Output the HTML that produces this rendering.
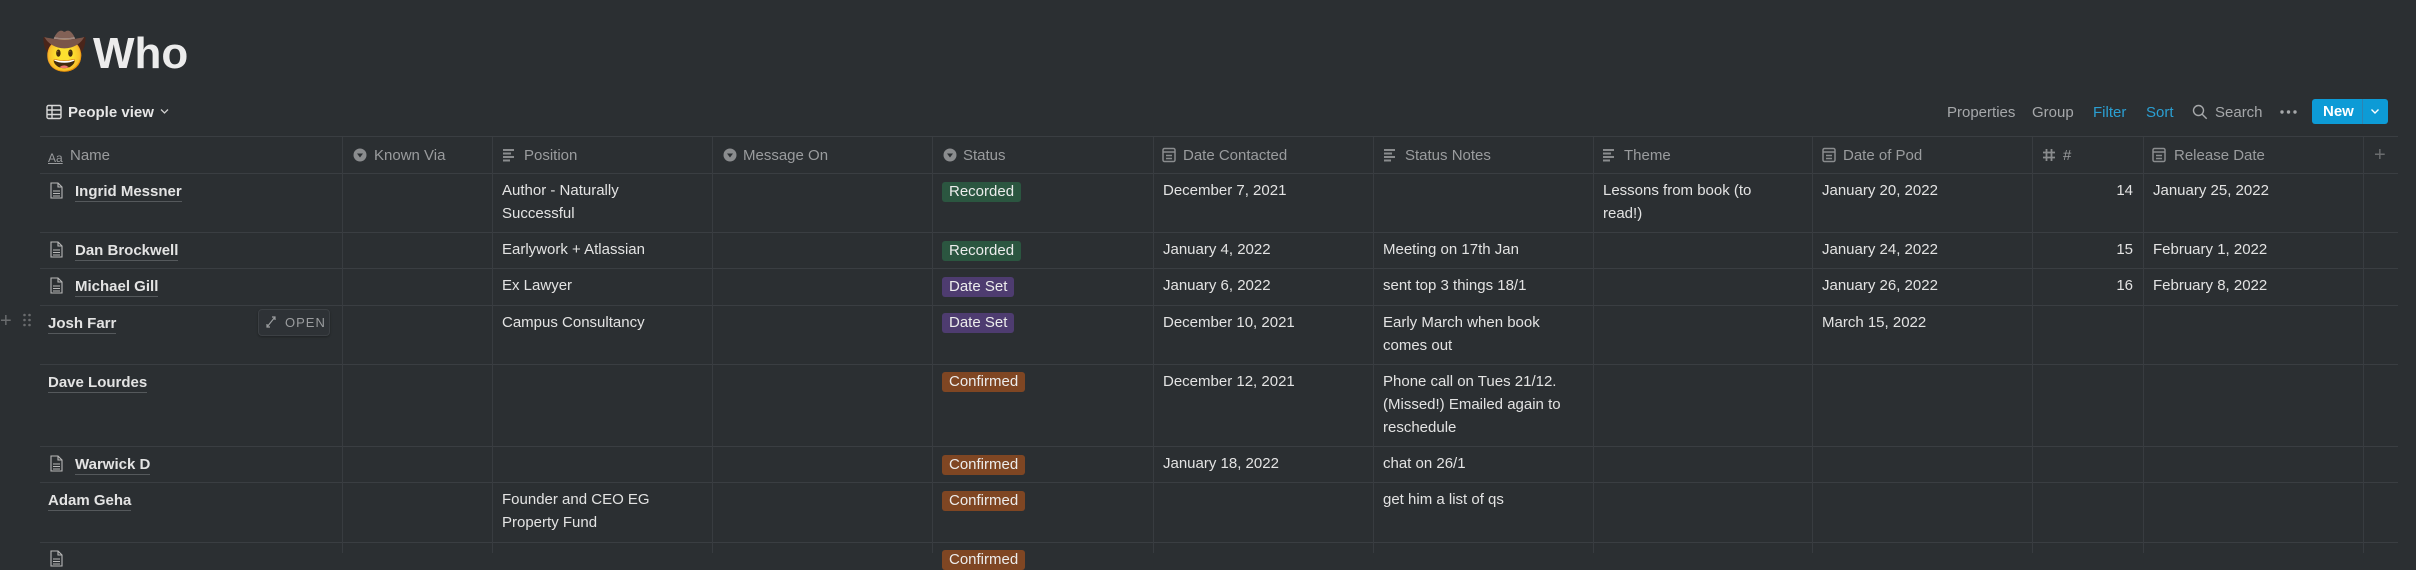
<!DOCTYPE html>
<html><head><meta charset="utf-8"><style>
*{margin:0;padding:0;box-sizing:border-box}
body{width:2416px;height:553px;background:#2b2f32;overflow:hidden;position:relative;font-family:"Liberation Sans",sans-serif;color:#e3e3e3;font-size:15px}
.a{position:absolute;white-space:nowrap}
.hl{position:absolute;height:1px;background:#3a3e42;left:40px;width:2358px}
.vl{position:absolute;width:1px;background:#383c40;top:137px;height:416px}
.h{position:absolute;top:146px;color:#9a9c9e;font-size:15px;line-height:20px;white-space:nowrap}
.t{position:absolute;line-height:23px;white-space:nowrap}
.n{font-weight:bold;border-bottom:1px solid #55595c;line-height:19px;padding-bottom:0}
.tag{position:absolute;height:20px;line-height:20px;padding:0 7px;border-radius:3px;font-size:15px;color:#ececec;white-space:nowrap}
.rec{background:#2b5640}.ds{background:#4e3c70}.cf{background:#7f4623}
.doc{position:absolute;width:13px;height:17px}
</style></head><body>
<div class="a" style="left:42px;top:30px;font-size:36px;line-height:44px">🤠</div>
<div class="a" style="left:93px;top:28px;font-size:44px;font-weight:bold;color:#ececec;line-height:52px">Who</div>
<svg class="a" style="left:46px;top:104px" width="16" height="16" viewBox="0 0 16 16" fill="none" stroke="#d8d8d8" stroke-width="1.4"><rect x="1" y="1.5" width="14" height="13" rx="1.5"/><path d="M1 6h14M1 10.5h14M6 1.5v13"/></svg>
<div class="a" style="left:68px;top:103px;font-size:15px;font-weight:bold;color:#e6e6e6;line-height:19px">People view</div>
<svg class="a" style="left:160px;top:108px" width="9" height="7" viewBox="0 0 9 7" fill="none" stroke="#cfcfcf" stroke-width="1.3"><path d="M1 1.5l3.5 3.5 3.5-3.5"/></svg>
<div class="a" style="left:1947px;top:103px;color:#a6a8aa;line-height:19px">Properties</div>
<div class="a" style="left:2032px;top:103px;color:#a6a8aa;line-height:19px">Group</div>
<div class="a" style="left:2093px;top:103px;color:#2b9fd2;line-height:19px">Filter</div>
<div class="a" style="left:2146px;top:103px;color:#2b9fd2;line-height:19px">Sort</div>
<svg class="a" style="left:2192px;top:104px" width="16" height="16" viewBox="0 0 16 16" fill="none" stroke="#a6a8aa" stroke-width="1.4"><circle cx="6.5" cy="6.5" r="5"/><path d="M10.2 10.2l4.5 4.5"/></svg>
<div class="a" style="left:2215px;top:103px;color:#a6a8aa;line-height:19px">Search</div>
<svg class="a" style="left:2280px;top:110px" width="17" height="4" viewBox="0 0 17 4" fill="#a6a8aa"><circle cx="2" cy="2" r="1.7"/><circle cx="8.5" cy="2" r="1.7"/><circle cx="15" cy="2" r="1.7"/></svg>
<div class="a" style="left:2312px;top:99px;width:76px;height:25px;background:#0d9bd6;border-radius:3px"></div>
<div class="a" style="left:2362px;top:99px;width:1px;height:25px;background:#2d84b3"></div>
<div class="a" style="left:2323px;top:102px;color:#fff;font-weight:bold;line-height:19px">New</div>
<svg class="a" style="left:2370px;top:108px" width="10" height="7" viewBox="0 0 10 7" fill="none" stroke="#fff" stroke-width="1.4"><path d="M1.5 1.5l3.5 3.5 3.5-3.5"/></svg>
<div class="hl" style="top:136px"></div>
<div class="hl" style="top:173px"></div>
<div class="hl" style="top:232px"></div>
<div class="hl" style="top:268px"></div>
<div class="hl" style="top:305px"></div>
<div class="hl" style="top:364px"></div>
<div class="hl" style="top:446px"></div>
<div class="hl" style="top:482px"></div>
<div class="hl" style="top:542px"></div>
<div class="vl" style="left:342px"></div><div class="vl" style="left:492px"></div><div class="vl" style="left:712px"></div><div class="vl" style="left:932px"></div><div class="vl" style="left:1153px"></div><div class="vl" style="left:1373px"></div><div class="vl" style="left:1593px"></div><div class="vl" style="left:1812px"></div><div class="vl" style="left:2032px"></div><div class="vl" style="left:2143px"></div><div class="vl" style="left:2363px"></div>
<div class="h" style="left:48px;font-size:12px;text-decoration:underline;top:148px">Aa</div><div class="h" style="left:70px">Name</div>
<svg class="a" style="left:353px;top:148px" width="14" height="14" viewBox="0 0 14 14"><circle cx="7" cy="7" r="6.5" fill="#8a8c8e"/><path d="M4 5.5h6L7 9.5z" fill="#2b2f32"/></svg><div class="h" style="left:374px">Known Via</div>
<svg class="a" style="left:502px;top:148px" width="14" height="14" viewBox="0 0 14 14" fill="#8a8c8e"><rect x="1" y="1" width="11" height="2"/><rect x="1" y="4.5" width="8" height="2"/><rect x="1" y="8" width="11" height="2"/><rect x="1" y="11.5" width="7" height="2"/></svg><div class="h" style="left:524px">Position</div>
<svg class="a" style="left:723px;top:148px" width="14" height="14" viewBox="0 0 14 14"><circle cx="7" cy="7" r="6.5" fill="#8a8c8e"/><path d="M4 5.5h6L7 9.5z" fill="#2b2f32"/></svg><div class="h" style="left:743px">Message On</div>
<svg class="a" style="left:943px;top:148px" width="14" height="14" viewBox="0 0 14 14"><circle cx="7" cy="7" r="6.5" fill="#8a8c8e"/><path d="M4 5.5h6L7 9.5z" fill="#2b2f32"/></svg><div class="h" style="left:963px">Status</div>
<svg class="a" style="left:1162px;top:147px" width="14" height="16" viewBox="0 0 14 16" fill="none" stroke="#8a8c8e" stroke-width="1.5"><rect x="1" y="1.5" width="12" height="13" rx="1.5"/><path d="M1 5h12M4 8.5h6M4 11.5h6"/></svg><div class="h" style="left:1183px">Date Contacted</div>
<svg class="a" style="left:1383px;top:148px" width="14" height="14" viewBox="0 0 14 14" fill="#8a8c8e"><rect x="1" y="1" width="11" height="2"/><rect x="1" y="4.5" width="8" height="2"/><rect x="1" y="8" width="11" height="2"/><rect x="1" y="11.5" width="7" height="2"/></svg><div class="h" style="left:1405px">Status Notes</div>
<svg class="a" style="left:1602px;top:148px" width="14" height="14" viewBox="0 0 14 14" fill="#8a8c8e"><rect x="1" y="1" width="11" height="2"/><rect x="1" y="4.5" width="8" height="2"/><rect x="1" y="8" width="11" height="2"/><rect x="1" y="11.5" width="7" height="2"/></svg><div class="h" style="left:1624px">Theme</div>
<svg class="a" style="left:1822px;top:147px" width="14" height="16" viewBox="0 0 14 16" fill="none" stroke="#8a8c8e" stroke-width="1.5"><rect x="1" y="1.5" width="12" height="13" rx="1.5"/><path d="M1 5h12M4 8.5h6M4 11.5h6"/></svg><div class="h" style="left:1843px">Date of Pod</div>
<svg class="a" style="left:2042px;top:148px" width="14" height="14" viewBox="0 0 14 14" fill="none" stroke="#8a8c8e" stroke-width="1.8"><path d="M4.5 1v12M9.5 1v12M1 4.5h12M1 9.5h12"/></svg><div class="h" style="left:2063px">#</div>
<svg class="a" style="left:2152px;top:147px" width="14" height="16" viewBox="0 0 14 16" fill="none" stroke="#8a8c8e" stroke-width="1.5"><rect x="1" y="1.5" width="12" height="13" rx="1.5"/><path d="M1 5h12M4 8.5h6M4 11.5h6"/></svg><div class="h" style="left:2174px">Release Date</div>
<div class="h" style="left:2374px;font-size:20px;top:145px;color:#6a6c6e">+</div>
<svg class="doc" style="left:50px;top:182px" viewBox="0 0 13 17" fill="none" stroke="#b8b8b8" stroke-width="1.1"><path d="M1 1h7l4 4v11H1z M8 1v4h4 M3 9h7M3 11.5h7M3 14h7"/></svg>
<svg class="doc" style="left:50px;top:241px" viewBox="0 0 13 17" fill="none" stroke="#b8b8b8" stroke-width="1.1"><path d="M1 1h7l4 4v11H1z M8 1v4h4 M3 9h7M3 11.5h7M3 14h7"/></svg>
<svg class="doc" style="left:50px;top:277px" viewBox="0 0 13 17" fill="none" stroke="#b8b8b8" stroke-width="1.1"><path d="M1 1h7l4 4v11H1z M8 1v4h4 M3 9h7M3 11.5h7M3 14h7"/></svg>
<svg class="doc" style="left:50px;top:455px" viewBox="0 0 13 17" fill="none" stroke="#b8b8b8" stroke-width="1.1"><path d="M1 1h7l4 4v11H1z M8 1v4h4 M3 9h7M3 11.5h7M3 14h7"/></svg>
<svg class="doc" style="left:50px;top:550px" viewBox="0 0 13 17" fill="none" stroke="#b8b8b8" stroke-width="1.1"><path d="M1 1h7l4 4v11H1z M8 1v4h4 M3 9h7M3 11.5h7M3 14h7"/></svg>
<div class="t n" style="left:75px;top:182px">Ingrid Messner</div>
<div class="t" style="left:502px;top:179px">Author - Naturally<br>Successful</div>
<div class="tag rec" style="left:942px;top:182px">Recorded</div>
<div class="t" style="left:1163px;top:179px">December 7, 2021</div>
<div class="t" style="left:1603px;top:179px">Lessons from book (to<br>read!)</div>
<div class="t" style="left:1822px;top:179px">January 20, 2022</div>
<div class="t" style="left:2042px;top:179px;width:91px;text-align:right">14</div>
<div class="t" style="left:2153px;top:179px">January 25, 2022</div>
<div class="t n" style="left:75px;top:241px">Dan Brockwell</div>
<div class="t" style="left:502px;top:238px">Earlywork + Atlassian</div>
<div class="tag rec" style="left:942px;top:241px">Recorded</div>
<div class="t" style="left:1163px;top:238px">January 4, 2022</div>
<div class="t" style="left:1383px;top:238px">Meeting on 17th Jan</div>
<div class="t" style="left:1822px;top:238px">January 24, 2022</div>
<div class="t" style="left:2042px;top:238px;width:91px;text-align:right">15</div>
<div class="t" style="left:2153px;top:238px">February 1, 2022</div>
<div class="t n" style="left:75px;top:277px">Michael Gill</div>
<div class="t" style="left:502px;top:274px">Ex Lawyer</div>
<div class="tag ds" style="left:942px;top:277px">Date Set</div>
<div class="t" style="left:1163px;top:274px">January 6, 2022</div>
<div class="t" style="left:1383px;top:274px">sent top 3 things 18/1</div>
<div class="t" style="left:1822px;top:274px">January 26, 2022</div>
<div class="t" style="left:2042px;top:274px;width:91px;text-align:right">16</div>
<div class="t" style="left:2153px;top:274px">February 8, 2022</div>
<div class="a" style="left:0;top:311px;color:#6a6c6e;font-size:20px;line-height:20px">+</div>
<svg class="a" style="left:23px;top:313px" width="8" height="14" viewBox="0 0 8 14" fill="#6a6c6e"><circle cx="1.5" cy="2" r="1.3"/><circle cx="6.5" cy="2" r="1.3"/><circle cx="1.5" cy="7" r="1.3"/><circle cx="6.5" cy="7" r="1.3"/><circle cx="1.5" cy="12" r="1.3"/><circle cx="6.5" cy="12" r="1.3"/></svg>
<div class="t n" style="left:48px;top:314px">Josh Farr</div>
<div class="a" style="left:258px;top:309px;width:72px;height:27px;background:#2e3236;border:1px solid #3c4044;border-radius:4px;box-shadow:0 1px 2px rgba(0,0,0,.3)"></div>
<svg class="a" style="left:266px;top:316px" width="10" height="12" viewBox="0 0 10 12" fill="none" stroke="#9a9c9e" stroke-width="1.2"><path d="M6 1h3v3M9 1L1 11M1 8v3h3"/></svg>
<div class="a" style="left:285px;top:313px;font-size:13px;color:#9a9c9e;letter-spacing:1px;line-height:19px">OPEN</div>
<div class="t" style="left:502px;top:311px">Campus Consultancy</div>
<div class="tag ds" style="left:942px;top:313px">Date Set</div>
<div class="t" style="left:1163px;top:311px">December 10, 2021</div>
<div class="t" style="left:1383px;top:311px">Early March when book<br>comes out</div>
<div class="t" style="left:1822px;top:311px">March 15, 2022</div>
<div class="t n" style="left:48px;top:373px">Dave Lourdes</div>
<div class="tag cf" style="left:942px;top:372px">Confirmed</div>
<div class="t" style="left:1163px;top:370px">December 12, 2021</div>
<div class="t" style="left:1383px;top:370px">Phone call on Tues 21/12.<br>(Missed!) Emailed again to<br>reschedule</div>
<div class="t n" style="left:75px;top:455px">Warwick D</div>
<div class="tag cf" style="left:942px;top:455px">Confirmed</div>
<div class="t" style="left:1163px;top:452px">January 18, 2022</div>
<div class="t" style="left:1383px;top:452px">chat on 26/1</div>
<div class="t n" style="left:48px;top:491px">Adam Geha</div>
<div class="t" style="left:502px;top:488px">Founder and CEO EG<br>Property Fund</div>
<div class="tag cf" style="left:942px;top:491px">Confirmed</div>
<div class="t" style="left:1383px;top:488px">get him a list of qs</div>
<div class="tag cf" style="left:942px;top:550px">Confirmed</div>
</body></html>
